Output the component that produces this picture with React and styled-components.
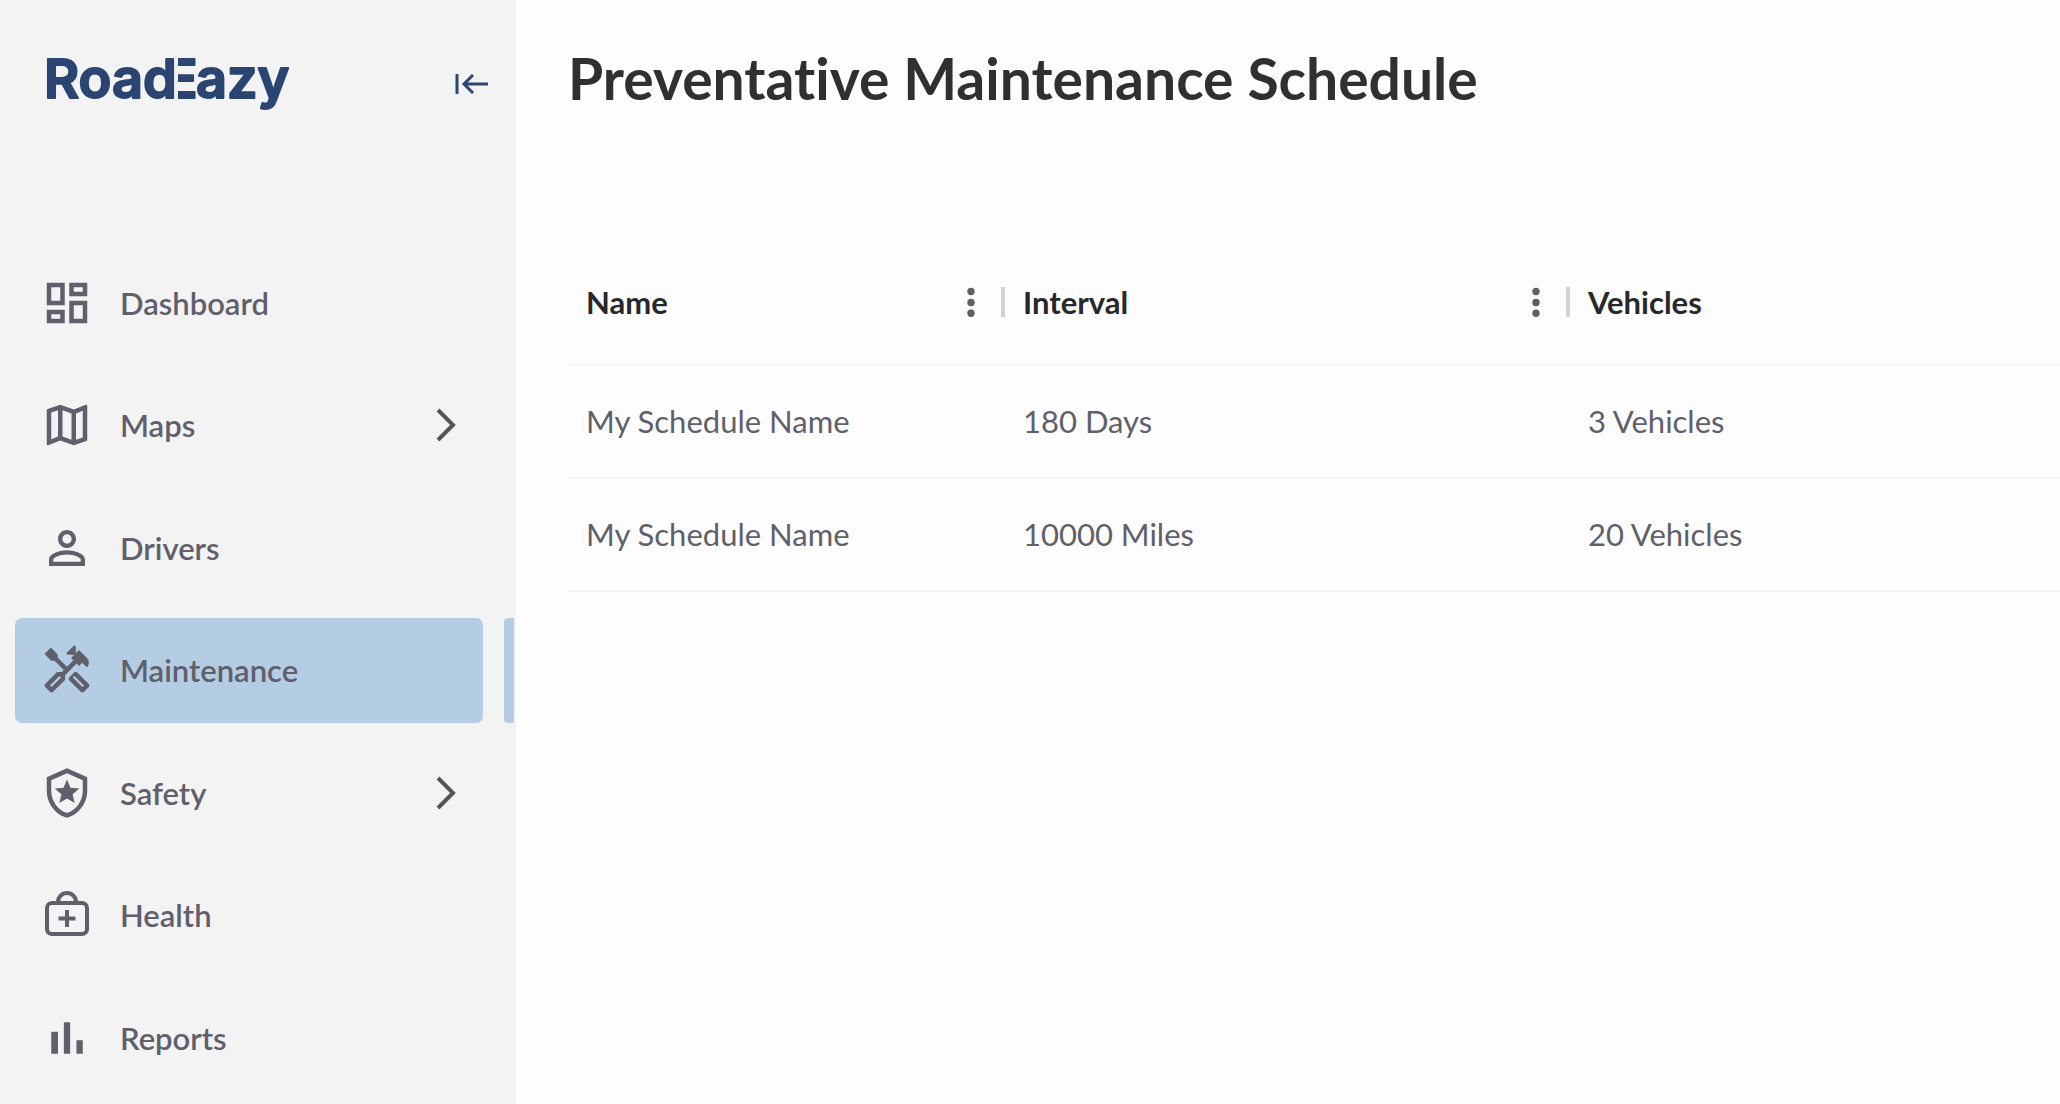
import React from "react";
import styled, { createGlobalStyle, css } from "styled-components";
import {
  MdOutlineDashboard,
  MdOutlineMap,
  MdOutlineHandyman,
  MdPersonOutline,
  MdOutlineLocalPolice,
} from "react-icons/md";

const GlobalStyle = createGlobalStyle`
  *, *::before, *::after { box-sizing: border-box; }
  body {
    margin: 0;
    background: #fdfdfd;
    color: #2f3032;
    font-family: Lato, "Open Sans", sans-serif;
    font-variant-ligatures: none;
  }
`;

const Page = styled.div`
  display: flex;
  min-height: 100vh;
`;

const Sidebar = styled.aside`
  display: flex;
  flex-direction: column;
  flex: none;
  width: 516px;
  padding: 44px 0 14px;
  background: #f3f3f3;
`;

const Brand = styled.div`
  display: flex;
  align-items: center;
  justify-content: space-between;
  height: 80px;
  padding: 0 27px 0 44px;
  margin-bottom: 126px;
`;

const Wordmark = styled.svg`
  width: 260px;
  height: 80px;
  fill: #2b4573;
  stroke: #2b4573;
  stroke-width: 2;
  stroke-linejoin: round;
  font-family: Inter, sans-serif;
  font-size: 54px;
  font-weight: 600;
`;

const IconButton = styled.button`
  display: flex;
  padding: 0;
  border: 0;
  background: none;
  color: ${(p) => p.$color};
  cursor: pointer;
`;

const Nav = styled.nav`
  display: flex;
  flex: 1;
  flex-direction: column;
  justify-content: space-between;
`;

const NavRow = styled.div`
  display: flex;
  justify-content: space-between;
  height: 105px;
  padding: 0 2px 0 15px;
  ${(p) =>
    p.$active &&
    css`
      &::after {
        content: "";
        width: 10px;
        border-radius: 4px 0 0 4px;
        background: #b4cce4;
      }
    `}
`;

const NavLink = styled.a`
  display: flex;
  align-items: center;
  gap: 26px;
  width: 468px;
  padding: 0 26px 0 25px;
  border-radius: 7px;
  background: ${(p) => (p.$active ? "#b4cce4" : "transparent")};
  color: #5f606b;
  font-size: 31px;
  font-weight: 600;
  line-height: 36px;
  text-decoration: none;

  & > svg {
    flex: none;
  }
`;

const NavLabel = styled.span`
  flex: 1;
`;

const Main = styled.main`
  flex: 1;
  min-width: 0;
  padding: 42px 0 0 52px;
  overflow: hidden;
`;

const Title = styled.h1`
  margin: 0 0 126px;
  font-size: 57px;
  font-weight: 700;
  line-height: 72px;
`;

const Table = styled.table`
  width: 100%;
  table-layout: fixed;
  border-collapse: collapse;
  text-align: left;
`;

const Col = styled.col`
  width: ${(p) => p.$width};
`;

const HeadCell = styled.th`
  height: 125px;
  padding: 0 0 0 18px;
  border-bottom: 2px solid #f4f4f5;
  color: #27282a;
  font-size: 31px;
  font-weight: 700;
  line-height: 36px;
`;

const HeadInner = styled.div`
  display: flex;
  align-items: center;
  justify-content: space-between;
  height: 36px;
`;

const HeadTools = styled.div`
  display: flex;
  align-items: center;
  gap: 26px;
`;

const Divider = styled.span`
  width: 4px;
  height: 30px;
  background: #d2d2d2;
`;

const Cell = styled.td`
  height: 113px;
  padding: 0 0 2px 18px;
  border-bottom: 2px solid #f4f4f5;
  color: #5f606b;
  font-size: 31px;
  line-height: 36px;
`;

const ICON = 54;

const HealthIcon = () => (
  <svg width={ICON} height={ICON} viewBox="0 0 54 54" fill="none" stroke="currentColor" strokeWidth="4">
    <rect x="7" y="15" width="40" height="31" rx="5" />
    <path d="M18 15v-1a9 9 0 0 1 18 0v1" />
    <path d="M27 22v17M18.500 30.500h17" />
  </svg>
);

const ReportsIcon = () => (
  <svg width={ICON} height={ICON} viewBox="0 0 24 24" fill="currentColor">
    <path d="M5 9.200h3V19H5zM10.600 5h2.800v14h-2.800zm5.600 8H19v6h-2.800z" />
  </svg>
);

const ChevronIcon = () => (
  <svg width="22" height="36" viewBox="0 0 22 36" fill="none" stroke="#555" strokeWidth="4">
    <path d="M3 3l15 15L3 33" />
  </svg>
);

const CollapseIcon = () => (
  <svg width="34" height="24" viewBox="0 0 34 24" fill="none" stroke="currentColor" strokeWidth="3">
    <path d="M2 2v20M33 12H9M18 3l-9 9 9 9" />
  </svg>
);

const DotsIcon = () => (
  <svg width="8" height="30" viewBox="0 0 8 30" fill="currentColor">
    <circle cx="4" cy="4.500" r="3.700" />
    <circle cx="4" cy="15.500" r="3.700" />
    <circle cx="4" cy="26.300" r="3.700" />
  </svg>
);

const NAV = [
  { label: "Dashboard", icon: <MdOutlineDashboard size={ICON} /> },
  { label: "Maps", icon: <MdOutlineMap size={ICON} />, expandable: true },
  { label: "Drivers", icon: <MdPersonOutline size={ICON} /> },
  { label: "Maintenance", icon: <MdOutlineHandyman size={ICON} />, active: true },
  { label: "Safety", icon: <MdOutlineLocalPolice size={ICON} />, expandable: true },
  { label: "Health", icon: <HealthIcon /> },
  { label: "Reports", icon: <ReportsIcon /> },
];

const COLUMNS = [
  { label: "Name", width: "437px", tools: true },
  { label: "Interval", width: "565px", tools: true },
  { label: "Vehicles", width: "auto" },
];

const ROWS = [
  ["My Schedule Name", "180 Days", "3 Vehicles"],
  ["My Schedule Name", "10000 Miles", "20 Vehicles"],
];

export default function App() {
  return (
    <Page>
      <GlobalStyle />
      <Sidebar>
        <Brand>
          <Wordmark viewBox="0 0 260 80" role="img" aria-label="RoadEazy">
            {/* the E shares the stem of the d, so only its arms show */}
            <clipPath id="e-arms">
              <rect x="134" y="0" width="40" height="80" />
            </clipPath>
            <text x="0" y="54">Road</text>
            <text x="121" y="54" clipPath="url(#e-arms)">E</text>
            <text x="152" y="54">azy</text>
          </Wordmark>
          <IconButton $color="#2b4573" type="button" aria-label="Collapse sidebar">
            <CollapseIcon />
          </IconButton>
        </Brand>
        <Nav>
          {NAV.map((item) => (
            <NavRow key={item.label} $active={item.active}>
              <NavLink href="#" $active={item.active} aria-current={item.active ? "page" : undefined}>
                {item.icon}
                <NavLabel>{item.label}</NavLabel>
                {item.expandable && <ChevronIcon />}
              </NavLink>
            </NavRow>
          ))}
        </Nav>
      </Sidebar>
      <Main>
        <Title>Preventative Maintenance Schedule</Title>
        <Table>
          <colgroup>
            {COLUMNS.map((c) => (
              <Col key={c.label} $width={c.width} />
            ))}
          </colgroup>
          <thead>
            <tr>
              {COLUMNS.map((c) => (
                <HeadCell key={c.label} scope="col">
                  <HeadInner>
                    {c.label}
                    {c.tools && (
                      <HeadTools>
                        <IconButton $color="#5f5f63" type="button" aria-label={`${c.label} column menu`}>
                          <DotsIcon />
                        </IconButton>
                        <Divider />
                      </HeadTools>
                    )}
                  </HeadInner>
                </HeadCell>
              ))}
            </tr>
          </thead>
          <tbody>
            {ROWS.map((row, i) => (
              <tr key={i}>
                {row.map((text) => (
                  <Cell key={text}>{text}</Cell>
                ))}
              </tr>
            ))}
          </tbody>
        </Table>
      </Main>
    </Page>
  );
}
